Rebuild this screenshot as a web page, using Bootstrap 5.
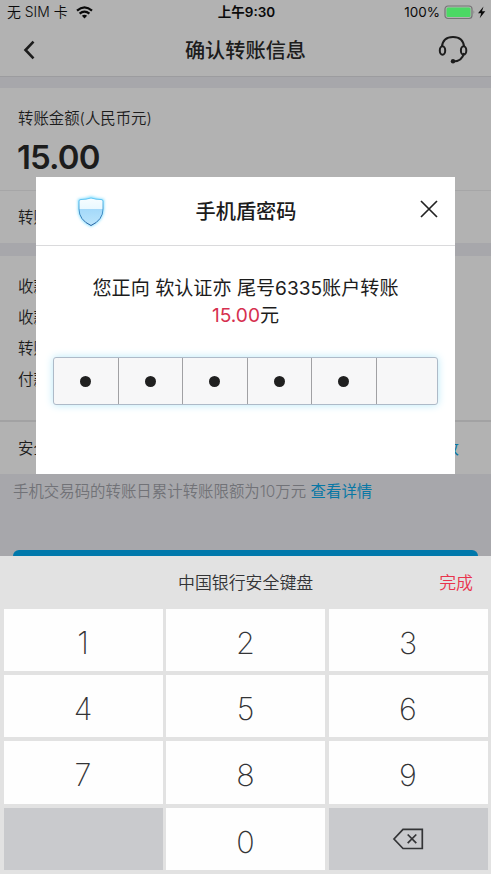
<!DOCTYPE html>
<html lang="zh-CN">
<head>
<meta charset="utf-8">
<meta name="viewport" content="width=device-width, initial-scale=1">
<title>确认转账信息</title>
<link href="https://cdn.jsdelivr.net/npm/bootstrap@5.3.0/dist/css/bootstrap.min.css" rel="stylesheet">
<style>
body{font-family:Inter,"Noto Sans CJK SC",sans-serif;background:#a7a7ab;color:#1c1c1c;overflow:hidden}
.phone{width:491px;height:874px;background:#a7a7ab;font-size:15.4px;line-height:31px;font-weight:350}
.pane{background:#b2b2b2}
.statusbar{height:25px;font-size:13.5px;line-height:25px;font-weight:400;color:#0a0a0a;padding:0 5px 0 7px}
.status-left{font-size:13.9px;font-weight:350}
.titlebar{height:52px;border-bottom:1px solid #9c9c9f;padding:0 23px 1px}
.title{font-size:20.2px;font-weight:500}
.side{width:30px}
.amount-pane{margin-top:11px;height:155px;padding:15px 0 0}
.px{padding-left:18px;padding-right:18px}
.amount{font-size:33px;font-weight:600;line-height:38px;margin-top:4px;letter-spacing:-.9px;padding-left:17px}
.note-row{height:53px;border-top:1px solid #a6a6a7;margin-top:14px}
.detail-pane{margin-top:13px;height:164px;padding-top:15px}
.safe-row{height:54px;border-top:2px solid #a2a2a3;padding-right:32px}
.blue{color:#0877a5;font-weight:400}
.tip{color:#717277;padding:2px 13px 0;white-space:nowrap;letter-spacing:.03px}
.submit{height:46px;margin:43px 13px 0;background:#0078ab;border-radius:6px}
.dialog-box{left:36px;top:177px;width:419px;height:297px;z-index:2}
.dialog-head{height:69px;border-bottom:1px solid #dadadc;padding:0 16px 0 38px}
.dialog-head .wing{width:50px;padding-top:2px}
.dialog-head .title{margin-left:-51px}
.dialog-head .close-icon{margin-bottom:4px}
.dialog-text{font-size:19.1px;line-height:27px;font-weight:400;padding-top:29px;white-space:nowrap}
.red-sum{color:#d6304f}
.pin{margin:28px 17px 0;height:48px;background:#f7f7f8;border:1px solid #aebac8;border-radius:3px;box-shadow:0 0 8px #b9e8f8}
.pin > div{width:64.5px;flex:none;border-right:1px solid #a1a1a4}
.pin > div:last-child{width:auto;flex:1;border-right:0}
.dot{width:11px;height:11px;background:#202020}
.keyboard{top:556px;height:318px;background:#e2e2e2;z-index:3;color:#333436}
.kb-head{height:53px;font-size:16.9px;padding:1px 18px 0}
.done{color:#e9344c}
.keys{display:grid;grid-template-columns:repeat(3,159px);grid-template-rows:62px 62px 63px 62px;gap:4px 3.5px;padding-left:3.5px}
.digit{background:#fefefe;font-size:30.5px;font-weight:250;padding-top:6px;line-height:1}
.util{background:#c9cacd}
svg{display:block}
</style>
<script src="https://cdn.jsdelivr.net/npm/bootstrap@5.3.0/dist/js/bootstrap.bundle.min.js"></script>
</head>
<body>
<main class="phone position-relative overflow-hidden">
  <div class="pane statusbar d-flex align-items-center">
    <div class="d-flex align-items-center flex-fill w-100 gap-2">
      <span class="status-left">无 SIM 卡</span>
      <svg width="17" height="13" viewBox="0 0 17 13" fill="none" stroke="#0a0a0a" stroke-width="2.2"><path d="M1 4.7Q8.5-1.8 16 4.7M3.6 7.7Q8.500 3.400 13.400 7.700"/><path d="M8.500 12.400L5.900 9.700Q8.500 7.700 11.100 9.700Z" fill="#0a0a0a" stroke="none"/></svg>
    </div>
    <div class="fw-semibold text-nowrap">上午9:30</div>
    <div class="d-flex align-items-center justify-content-end flex-fill w-100">
      <span class="me-1">100%</span>
      <svg width="42" height="15" viewBox="0 0 42 15"><rect x="1" y="1" width="27" height="12.500" rx="3" fill="none" stroke="#747675" stroke-width="1.200"/><rect x="2.500" y="2.500" width="24" height="9.500" rx="1.500" fill="#4bd964"/><path d="M29.600 5.200Q31.300 7.200 29.600 9.200Z" fill="#747675"/><path d="M39.500 1.500L34 8.300H37.200L35.700 13.300L41.300 6.300H38Z" fill="#0a0a0a"/></svg>
    </div>
  </div>
  <header class="pane titlebar d-flex align-items-center justify-content-between">
    <div class="side"><svg width="13" height="20" viewBox="0 0 13 20" fill="none" stroke="#1c1c1c" stroke-width="2.600"><path d="M10.500 1.700L2.500 10L10.500 18.300"/></svg></div>
    <div class="title">确认转账信息</div>
    <div class="side"><svg width="30" height="30" viewBox="0 0 30 30" fill="none" stroke="#1c1c1c" stroke-width="2"><path d="M3.800 12C4.500 5.300 9 2 15 2S25.500 5.300 26.200 12M26 18C24.800 23.500 21 26.500 15 26.500"/><ellipse cx="4.500" cy="15.500" rx="2.700" ry="4.200"/><ellipse cx="25.600" cy="15.500" rx="2.700" ry="4.200"/><circle cx="15" cy="26.300" r="2.200" fill="#1c1c1c" stroke="none"/></svg></div>
  </header>

  <section class="pane amount-pane">
    <div class="px">转账金额(人民币元)</div>
    <div class="amount">15.00</div>
    <div class="px note-row d-flex align-items-center">转账附言</div>
  </section>
  <section class="pane detail-pane px">
    <div>收款人名称</div>
    <div>收款账户</div>
    <div>转账方式</div>
    <div>付款账户</div>
  </section>
  <div class="pane safe-row px d-flex align-items-center justify-content-between"><span>安全工具</span><span class="blue">更改</span></div>
  <div class="tip">手机交易码的转账日累计转账限额为10万元 <span class="blue">查看详情</span></div>
  <div class="submit"></div>

  <section class="dialog-box position-absolute bg-white">
    <div class="dialog-head d-flex align-items-center justify-content-between">
      <div class="wing"><svg width="34" height="38" viewBox="0 0 34 38"><defs><linearGradient id="shield" x2="0" y2="1"><stop offset="0" stop-color="#f7fdff"/><stop offset=".4" stop-color="#e9f8ff"/><stop offset=".41" stop-color="#a4d9fa"/><stop offset="1" stop-color="#bce5fb"/></linearGradient><linearGradient id="rim" x2="0" y2="1"><stop offset="0" stop-color="#62c9f6"/><stop offset="1" stop-color="#285e9f"/></linearGradient><filter id="glow" x="-30%" y="-30%" width="160%" height="160%"><feGaussianBlur stdDeviation="1.600"/></filter></defs><path d="M5 7Q11 7 17 4.500Q23 7 29 7V16Q29 27 17 32.500Q5 27 5 16Z" fill="#7bdcff" stroke="#7bdcff" stroke-width="2" filter="url(#glow)"/><path d="M5 8Q5 6.500 7 6.500Q12 6.500 17 5Q22 6.500 27 6.500Q29 6.500 29 8V16Q29 27 17 32.500Q5 27 5 16Z" fill="url(#shield)" stroke="url(#rim)" stroke-width="1"/></svg></div>
      <div class="title">手机盾密码</div>
      <svg class="close-icon" width="20" height="20" viewBox="0 0 20 20" stroke="#222" stroke-width="1.700"><path d="M2 2L18 18M18 2L2 18"/></svg>
    </div>
    <div class="dialog-text text-center">您正向 软认证亦 尾号6335账户转账<br><span class="red-sum">15.00</span>元</div>
    <div class="pin d-flex">
      <div class="d-flex align-items-center justify-content-center"><span class="dot rounded-circle"></span></div>
      <div class="d-flex align-items-center justify-content-center"><span class="dot rounded-circle"></span></div>
      <div class="d-flex align-items-center justify-content-center"><span class="dot rounded-circle"></span></div>
      <div class="d-flex align-items-center justify-content-center"><span class="dot rounded-circle"></span></div>
      <div class="d-flex align-items-center justify-content-center"><span class="dot rounded-circle"></span></div>
      <div></div>
    </div>
  </section>

  <section class="keyboard position-absolute start-0 w-100">
    <div class="kb-head d-flex align-items-center justify-content-between"><span class="side"></span><span class="ms-1">中国银行安全键盘</span><span class="done">完成</span></div>
    <div class="keys">
      <div class="digit d-flex align-items-center justify-content-center">1</div>
      <div class="digit d-flex align-items-center justify-content-center">2</div>
      <div class="digit d-flex align-items-center justify-content-center">3</div>
      <div class="digit d-flex align-items-center justify-content-center">4</div>
      <div class="digit d-flex align-items-center justify-content-center">5</div>
      <div class="digit d-flex align-items-center justify-content-center">6</div>
      <div class="digit d-flex align-items-center justify-content-center">7</div>
      <div class="digit d-flex align-items-center justify-content-center">8</div>
      <div class="digit d-flex align-items-center justify-content-center">9</div>
      <div class="util"></div>
      <div class="digit d-flex align-items-center justify-content-center">0</div>
      <div class="util d-flex align-items-center justify-content-center"><svg width="32" height="22" viewBox="0 0 32 22" fill="none" stroke="#333436" stroke-width="1.700"><path d="M11 1.300H30.300V20.500H11L2 11ZM15.700 6.500L24.300 15.200M24.300 6.500L15.700 15.200"/></svg></div>
    </div>
  </section>
</main>
</body>
</html>
